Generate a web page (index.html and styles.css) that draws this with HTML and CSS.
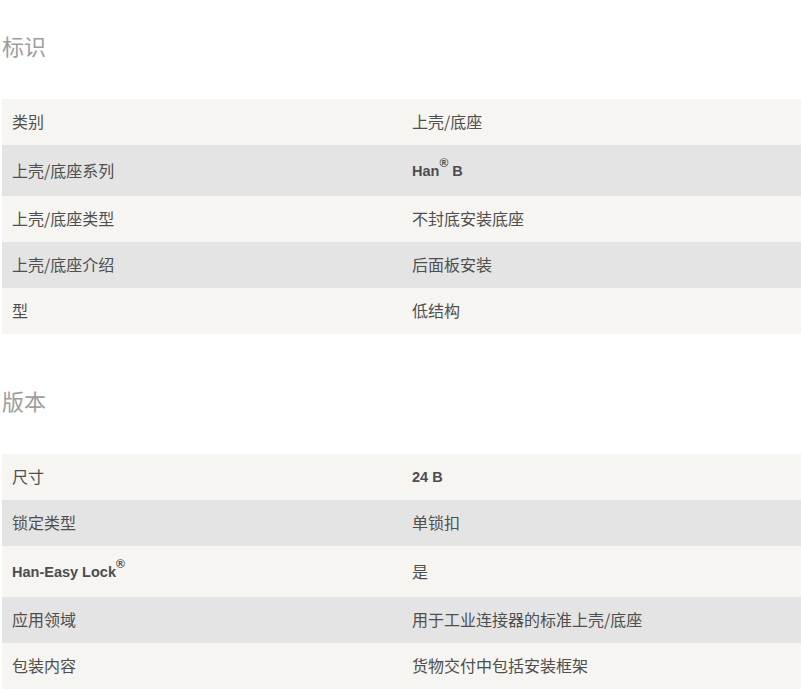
FILE: index.html
```html
<!DOCTYPE html>
<html lang="zh-CN">
<head>
<meta charset="utf-8">
<link rel="stylesheet" href="styles.css">
</head>
<body>
<div class="page">
  <section class="group">
    <h2 class="group-title">标识</h2>
    <table class="spec">
      <tr class="light"><td>类别</td><td>上壳/底座</td></tr>
      <tr class="dark tall"><td>上壳/底座系列</td><td><b>Han<sup>®</sup> B</b></td></tr>
      <tr class="light"><td>上壳/底座类型</td><td>不封底安装底座</td></tr>
      <tr class="dark"><td>上壳/底座介绍</td><td>后面板安装</td></tr>
      <tr class="light"><td>型</td><td>低结构</td></tr>
    </table>
  </section>
  <section class="group">
    <h2 class="group-title">版本</h2>
    <table class="spec">
      <tr class="light"><td>尺寸</td><td><b>24 B</b></td></tr>
      <tr class="dark"><td>锁定类型</td><td>单锁扣</td></tr>
      <tr class="light tall"><td><b>Han-Easy Lock<sup>®</sup></b></td><td>是</td></tr>
      <tr class="dark"><td>应用领域</td><td>用于工业连接器的标准上壳/底座</td></tr>
      <tr class="light"><td>包装内容</td><td>货物交付中包括安装框架</td></tr>
    </table>
  </section>
</div>
</body>
</html>
```

FILE: styles.css
```css
html, body {
  margin: 0;
  padding: 0;
  background: #ffffff;
}
body {
  font-family: "Noto Sans CJK SC", "Noto Sans", sans-serif;
  color: #4f4f4f;
  overflow: hidden;
}
.page {
  padding: 30px 0 0 2px;
  width: 800px;
}
.group {
  margin-bottom: 51px;
}
.group-title {
  margin: 0 0 39px 0;
  font-size: 22px;
  line-height: 30px;
  font-weight: normal;
  color: #9d9d9d;
}
.spec {
  width: 800px;
  border-collapse: collapse;
  table-layout: fixed;
}
.spec td {
  height: 46px;
  padding: 0 10px 3px 10px;
  font-size: 16px;
  line-height: 22px;
  vertical-align: middle;
  box-sizing: border-box;
}
.spec tr.tall td {
  height: 51px;
  padding-top: 1px;
  padding-bottom: 2px;
}
.spec td:first-child {
  width: 400px;
}
.spec tr.light {
  background: #f6f5f1;
}
.spec tr.dark {
  background: #e4e4e4;
}
.spec b {
  font-family: "Liberation Sans", Arial, sans-serif;
  font-weight: bold;
  font-size: 14.5px;
  color: #4c4c52;
}
.spec sup {
  font-size: 12px;
  line-height: 0;
  position: relative;
  top: -3px;
}
```
